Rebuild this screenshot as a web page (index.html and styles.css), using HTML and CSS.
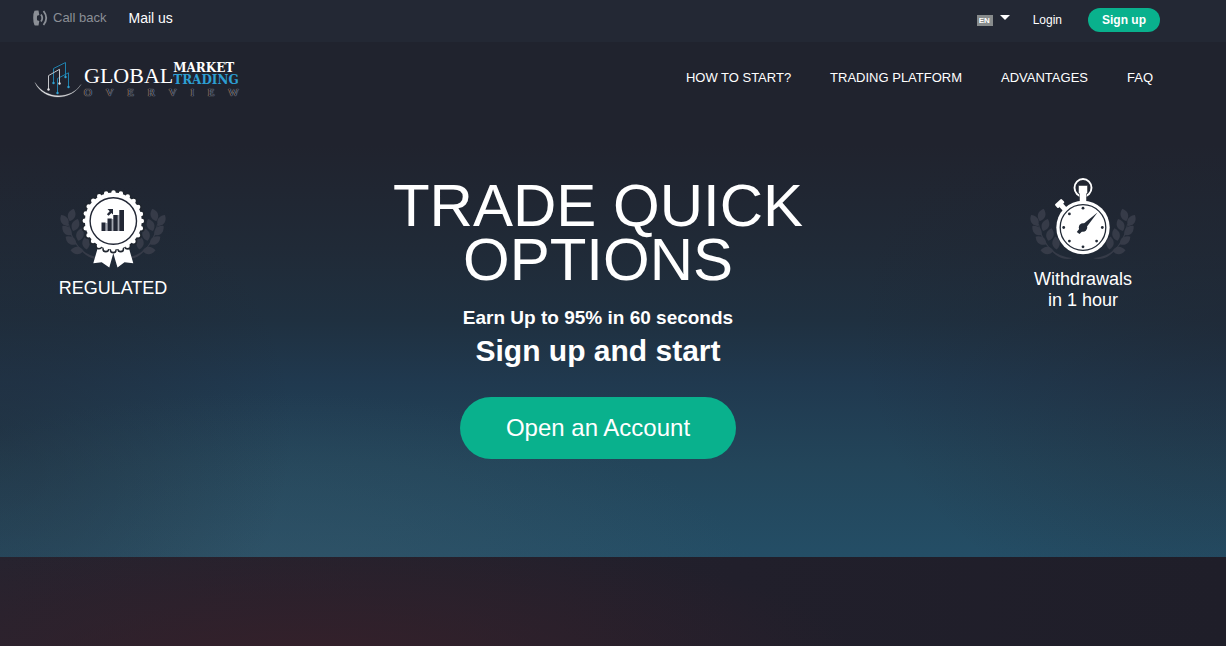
FILE: index.html
```html
<!DOCTYPE html>
<html lang="en">
<head>
<meta charset="utf-8">
<meta name="viewport" content="width=device-width, initial-scale=1">
<title>Global Market Trading Overview</title>
<link rel="stylesheet" href="styles.css">
</head>
<body>
<svg class="defs" aria-hidden="true">
  <defs>
    <path id="leaf" d="M0 -6.500C5 -2.500 5 3 0 6.500C-5 3 -5 -2.500 0 -6.500Z"/>
    <g id="branch">
      <use href="#leaf" transform="translate(11.700 5) rotate(18)"/>
      <use href="#leaf" transform="translate(4.500 10.500) rotate(-32)"/>
      <use href="#leaf" transform="translate(15.500 15) rotate(22)"/>
      <use href="#leaf" transform="translate(7 20.500) rotate(-45)"/>
      <use href="#leaf" transform="translate(20 24.500) rotate(15)"/>
      <use href="#leaf" transform="translate(11 30.500) rotate(-55)"/>
      <use href="#leaf" transform="translate(26 33) rotate(-5)"/>
      <use href="#leaf" transform="translate(17 40.500) rotate(-88)"/>
      <path d="M9 14C11 26 18 40 30 45C35 47 39 48 43 48C38 50 31 49 26 45C17 38 10 28 8 14Z"/>
    </g>
    <g id="wreath" fill="#363b48">
      <use href="#branch"/>
      <use href="#branch" transform="translate(106 0) scale(-1 1)"/>
    </g>
  </defs>
</svg>

<div class="topbar">
  <div class="container topbar-row">
    <div class="contacts">
      <a class="callback" href="#callback">
        <svg width="15" height="16" viewBox="0 0 15 16" aria-hidden="true">
          <path d="M1.500 .8Q3 .2 5.500 .6L6.300 5L4.100 5.700Q3.700 8 4.100 10.300L6.300 11L5.500 15.400Q3 15.800 1.500 15.200Q.2 13 .2 8T1.500 .8Z" fill="#8b8f96"/>
          <path d="M8 4.500Q10.500 8 8 11.500M10.500 1Q16 8 10.500 15" fill="none" stroke="#8b8f96" stroke-width="1.800"/>
        </svg>
        Call back
      </a>
      <a class="mail" href="#mail">Mail us</a>
    </div>
    <div class="account">
      <label class="lang">
        <select aria-label="Language"><option>EN</option></select>
        <svg width="10" height="5" viewBox="0 0 10 5" aria-hidden="true"><path d="M0 0H10L5 5Z" fill="#fff"/></svg>
      </label>
      <a class="login" href="#login">Login</a>
      <a class="signup" href="#signup">Sign up</a>
    </div>
  </div>
</div>

<main class="hero">
  <header class="container header">
    <a class="logo" href="#home">
      <svg width="50" height="38" viewBox="0 0 50 38" aria-hidden="true">
        <g fill="none" stroke-width="1">
          <path d="M20.500 23.500V8.500L32.500 2.500V16.500M24.500 33V18.500L35.500 12.800V27" stroke="#1f81ad"/>
          <path d="M15.500 29.500V15.600L26.500 9.300V23.500" stroke="#c4c6ca"/>
        </g>
        <g fill="#2fa3d4"><circle cx="20.500" cy="23" r="1.200"/><circle cx="32.500" cy="17" r="1.200"/><circle cx="24.500" cy="33" r="1.200"/><circle cx="35.500" cy="27" r="1.200"/></g>
        <g fill="#e4e4e6"><circle cx="15.500" cy="29.500" r="1.200"/><circle cx="26.500" cy="23.500" r="1.200"/></g>
        <path d="M2 22.500C10 41 37 42 48 24.500C38 40 12 39.500 2 22.500Z" fill="#e8e8ea" stroke="#b0b3b9" stroke-width=".3"/>
      </svg>
      <span class="wordmark">
        <span class="name">
          <span class="global">GLOBAL</span>
          <span class="stack"><span>MARKET</span><span class="trading">TRADING</span></span>
        </span>
        <span class="overview"><span>O</span><span>V</span><span>E</span><span>R</span><span>V</span><span>I</span><span>E</span><span>W</span></span>
      </span>
    </a>
    <nav class="nav" aria-label="Main">
      <a href="#start">HOW TO START?</a>
      <a href="#platform">TRADING PLATFORM</a>
      <a href="#advantages">ADVANTAGES</a>
      <a href="#faq">FAQ</a>
    </nav>
  </header>

  <div class="container hero-grid">
    <div class="feature">
      <svg width="106" height="78" viewBox="0 0 106 78" aria-hidden="true">
        <use href="#wreath" y="20"/>
        <path d="M38.300 56L33.300 73.300L41.700 72.300L49.300 77.500L53.300 63.300L57.500 77.500L64.500 72.300L73.300 73.300L68.300 56Z" fill="#fff"/>
        <circle cx="53.300" cy="31" r="29" fill="#20262f" stroke="#20262f" stroke-width="7" stroke-linecap="round" stroke-dasharray="0 7.592"/>
        <circle cx="53.300" cy="31" r="28.500" fill="#fff" stroke="#fff" stroke-width="4.500" stroke-linecap="round" stroke-dasharray="0 7.461"/>
        <circle cx="53.300" cy="31" r="23.200" fill="none" stroke="#222735" stroke-width="1.400"/>
        <path d="M45.500 33H47.500V41H45.500ZM51.500 29H53.500V41H51.500ZM57.500 25H59.500V41H57.500Z" fill="#a3a7b1"/>
        <path d="M41.500 32.500H45.500V41H41.500ZM47.500 28.500H51.700V41H47.500ZM53.300 25H57.700V41H53.300ZM59.300 20H64V41H59.300ZM47.500 19H53V24.500L51.400 22.900L48.600 25.800L46.900 24.200L49.700 21.200Z" fill="#222735"/>
      </svg>
      <p>REGULATED</p>
    </div>

    <div class="pitch">
      <h1>TRADE QUICK OPTIONS</h1>
      <p class="earn">Earn Up to 95% in 60 seconds</p>
      <p class="start">Sign up and start</p>
      <a class="cta" href="#signup">Open an Account</a>
    </div>

    <div class="feature">
      <svg width="106" height="81" viewBox="0 0 106 81" aria-hidden="true">
        <use href="#wreath" y="32"/>
        <ellipse cx="53" cy="9.800" rx="8.500" ry="8.800" fill="none" stroke="#fff" stroke-width="1.900"/>
        <path d="M48.500 7.500H57.500V14.500L56.500 16V25H49.500V16L48.500 14.500Z" fill="#fff" stroke="#20262f" stroke-width=".5"/>
        <g transform="translate(31 27) rotate(-42)" fill="#fff"><rect x="-4.500" y="-4.500" width="9" height="5" rx="1"/><rect x="-2.500" y="0" width="5" height="7"/></g>
        <circle cx="53" cy="49.500" r="26.700" fill="#fff"/>
        <circle cx="53" cy="49.500" r="22.800" fill="none" stroke="#222a36" stroke-width="1.300"/>
        <g fill="#222a36">
          <circle cx="53" cy="30.200" r="1.400"/><circle cx="53" cy="68.800" r="1.400"/><circle cx="33.700" cy="49.500" r="1.400"/><circle cx="72.300" cy="49.500" r="1.400"/>
          <circle cx="39.400" cy="35.900" r="1.400"/><circle cx="66.600" cy="63.100" r="1.400"/><circle cx="39.400" cy="63.100" r="1.400"/>
          <path d="M67.500 34.500L55.500 50.500L52 47Z"/>
          <circle cx="53" cy="49.500" r="4.200"/>
          <path d="M51.500 48L54.500 51L49.500 56L46.800 54Z"/>
        </g>
      </svg>
      <p>Withdrawals<br>in 1 hour</p>
    </div>
  </div>
</main>
<section class="lower" aria-label="More"></section>
</body>
</html>
```
FILE: styles.css
```css
* {
  box-sizing: border-box;
}

body {
  margin: 0;
  min-height: 100vh;
  display: flex;
  flex-direction: column;
  background: #20232e;
  color: #fff;
  font-family: "Liberation Sans", Arial, sans-serif;
}

a {
  color: inherit;
  text-decoration: none;
}

p,
h1 {
  margin: 0;
}

.defs {
  position: absolute;
  width: 0;
  height: 0;
}

.container {
  padding: 0 66px 0 33px;
}

.topbar {
  background: #232834;
}

.topbar-row {
  display: flex;
  justify-content: space-between;
  align-items: flex-start;
  padding-top: 8px;
  padding-bottom: 10px;
}

.contacts {
  display: flex;
  gap: 22px;
  line-height: 20px;
  font-size: 14px;
}

.callback {
  display: flex;
  align-items: center;
  gap: 5px;
  font-size: 13px;
  color: #8b8f96;
}

.account {
  display: flex;
  align-items: center;
  font-size: 12px;
}

.lang {
  display: flex;
  align-items: center;
  gap: 7px;
  margin-right: 23px;
}

.lang svg {
  margin-bottom: 5px;
}

.lang select {
  appearance: none;
  width: 16px;
  height: 11px;
  padding: 0 2px;
  border: 0;
  border-radius: 0;
  background: #878b8c;
  color: #fff;
  font: bold 8px/11px "Liberation Sans", Arial, sans-serif;
}

.login {
  margin-right: 26px;
}

.signup {
  padding: 0 14px;
  border-radius: 12px;
  background: #09b18d;
  font-weight: bold;
  line-height: 24px;
}

.hero {
  padding-bottom: 98px;
  background:
    radial-gradient(ellipse 24% 55% at 0 75%, rgba(32, 35, 46, 0.4), transparent),
    radial-gradient(ellipse 30% 60% at 100% 55%, rgba(32, 35, 46, 0.4), transparent),
    radial-gradient(ellipse 40% 40% at 22% 108%, rgba(60, 88, 104, 0.5), transparent),
    linear-gradient(#20232e 0, #20232e 20%, #202a37 40%, #1f3040 54%, #20394f 66%, #23455a 82%, #244e66 100%);
}

.header {
  display: flex;
  justify-content: space-between;
  padding-top: 18px;
  padding-right: 73px;
}

.logo {
  display: flex;
  gap: 1px;
  font-family: "Liberation Serif", "Times New Roman", serif;
}

.wordmark {
  display: flex;
  flex-direction: column;
}

.name {
  display: flex;
  align-items: flex-end;
}

.global {
  font-size: 22px;
  line-height: 20px;
}

.stack {
  display: flex;
  flex-direction: column;
  padding-top: 2px;
  font-family: "DejaVu Serif", serif;
  font-size: 12px;
  font-weight: bold;
  line-height: 12px;
}

.trading {
  color: #2d9fd3;
}

.overview {
  display: flex;
  justify-content: space-between;
  font-size: 11px;
  line-height: 12px;
  color: #111217;
  text-shadow: 0 0 1px #b4b6ba, 0 0 1px #b4b6ba;
}

.nav {
  display: flex;
  gap: 39px;
  font-size: 13px;
  line-height: 36px;
}

.hero-grid {
  display: grid;
  grid-template-columns: 160px minmax(0, 440px) 160px;
  justify-content: space-between;
  align-items: start;
  padding-top: 80px;
  padding-left: 33px;
  padding-right: 63px;
}

.feature {
  min-height: 133px;
  display: flex;
  flex-direction: column;
  align-items: center;
  justify-content: center;
  gap: 10px;
  font-size: 18px;
  line-height: 21px;
  text-align: center;
}

.pitch {
  display: flex;
  flex-direction: column;
  align-items: center;
  padding-top: 1px;
  text-align: center;
}

h1 {
  font-size: 60px;
  font-weight: normal;
  line-height: 54px;
}

.earn {
  padding-top: 19px;
  font-size: 19px;
  font-weight: bold;
  line-height: 24px;
}

.start {
  padding-top: 3px;
  font-size: 30px;
  font-weight: bold;
  line-height: 36px;
}

.cta {
  margin-top: 28px;
  padding: 0 46px;
  border-radius: 31px;
  background: #09b18d;
  font-size: 24px;
  line-height: 62px;
}

.lower {
  flex: 1;
  min-height: 88px;
  background:
    radial-gradient(ellipse 45% 150% at 25% 120%, #35202a, rgba(53, 32, 42, 0)),
    linear-gradient(90deg, #26232f, #211f2b 60%, #1f1e29);
}
```
